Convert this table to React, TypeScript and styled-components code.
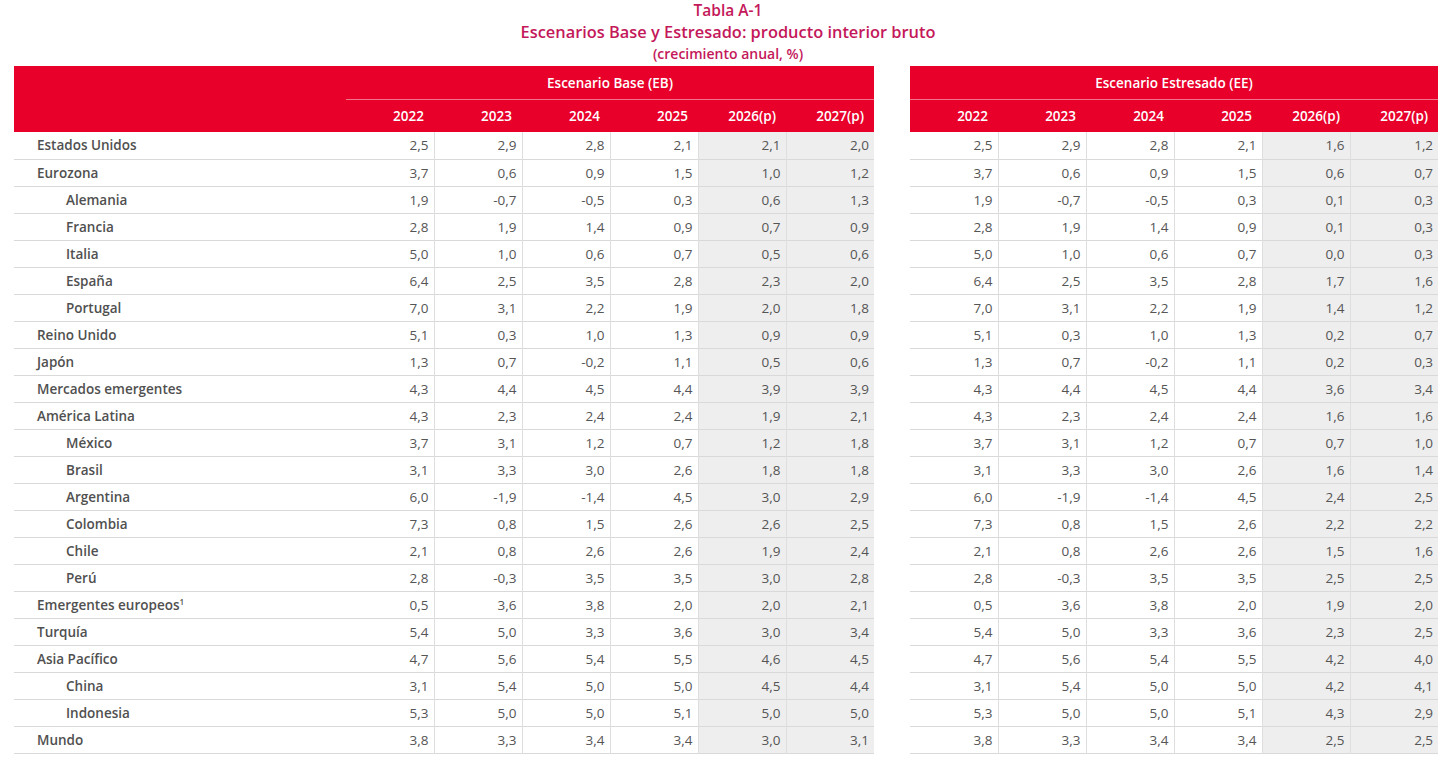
import React from 'react';
import styled, { createGlobalStyle, css } from 'styled-components';

const GlobalStyle = createGlobalStyle`
  html, body {
    margin: 0;
    padding: 0;
    background: #ffffff;
  }
  body {
    font-family: 'Open Sans', 'Liberation Sans', sans-serif;
  }
`;

interface RowData {
  label: string;
  indent?: boolean;
  note?: string;
  base: string[];
  stress: string[];
}

const years = ['2022', '2023', '2024', '2025', '2026(p)', '2027(p)'];

// las cuatro primeras columnas coinciden en ambos escenarios
const r = (
  label: string,
  base: string,
  stress: string,
  indent = false,
  note?: string,
): RowData => {
  const b = base.split(' ');
  return {
    label,
    indent,
    note,
    base: b,
    stress: [...b.slice(0, 4), ...stress.split(' ')],
  };
};

const rows: RowData[] = [
  r('Estados Unidos', '2,5 2,9 2,8 2,1 2,1 2,0', '1,6 1,2'),
  r('Eurozona', '3,7 0,6 0,9 1,5 1,0 1,2', '0,6 0,7'),
  r('Alemania', '1,9 -0,7 -0,5 0,3 0,6 1,3', '0,1 0,3', true),
  r('Francia', '2,8 1,9 1,4 0,9 0,7 0,9', '0,1 0,3', true),
  r('Italia', '5,0 1,0 0,6 0,7 0,5 0,6', '0,0 0,3', true),
  r('España', '6,4 2,5 3,5 2,8 2,3 2,0', '1,7 1,6', true),
  r('Portugal', '7,0 3,1 2,2 1,9 2,0 1,8', '1,4 1,2', true),
  r('Reino Unido', '5,1 0,3 1,0 1,3 0,9 0,9', '0,2 0,7'),
  r('Japón', '1,3 0,7 -0,2 1,1 0,5 0,6', '0,2 0,3'),
  r('Mercados emergentes', '4,3 4,4 4,5 4,4 3,9 3,9', '3,6 3,4'),
  r('América Latina', '4,3 2,3 2,4 2,4 1,9 2,1', '1,6 1,6'),
  r('México', '3,7 3,1 1,2 0,7 1,2 1,8', '0,7 1,0', true),
  r('Brasil', '3,1 3,3 3,0 2,6 1,8 1,8', '1,6 1,4', true),
  r('Argentina', '6,0 -1,9 -1,4 4,5 3,0 2,9', '2,4 2,5', true),
  r('Colombia', '7,3 0,8 1,5 2,6 2,6 2,5', '2,2 2,2', true),
  r('Chile', '2,1 0,8 2,6 2,6 1,9 2,4', '1,5 1,6', true),
  r('Perú', '2,8 -0,3 3,5 3,5 3,0 2,8', '2,5 2,5', true),
  r('Emergentes europeos', '0,5 3,6 3,8 2,0 2,0 2,1', '1,9 2,0', false, '1'),
  r('Turquía', '5,4 5,0 3,3 3,6 3,0 3,4', '2,3 2,5'),
  r('Asia Pacífico', '4,7 5,6 5,4 5,5 4,6 4,5', '4,2 4,0'),
  r('China', '3,1 5,4 5,0 5,0 4,5 4,4', '4,2 4,1', true),
  r('Indonesia', '5,3 5,0 5,0 5,1 5,0 5,0', '4,3 2,9', true),
  r('Mundo', '3,8 3,3 3,4 3,4 3,0 3,1', '2,5 2,5'),
];

const Page = styled.div`
  width: 1449px;
  box-sizing: border-box;
  padding: 0 11px 0 14px;
`;

const TitleBlock = styled.header`
  display: flex;
  flex-direction: column;
  align-items: center;
  color: #c4185a;
  font-weight: 600;
  margin-bottom: 3.5px;
  padding-left: 4px;
`;

const TitleLine = styled.div<{ size: number; lh: number }>`
  font-size: ${({ size }) => size}px;
  line-height: ${({ lh }) => lh}px;
  white-space: nowrap;
`;

const Panels = styled.div`
  display: flex;
  flex-direction: row;
  gap: 36px;
  align-items: flex-start;
`;

const Table = styled.table<{ width: number }>`
  width: ${({ width }) => width}px;
  border-collapse: collapse;
  table-layout: fixed;
`;

const GroupHead = styled.th`
  background: #e8002b;
  color: #ffffff;
  font-size: 13.5px;
  font-weight: 600;
  height: 33px;
  padding: 0;
  text-align: center;
  border-bottom: 1px solid rgba(255, 255, 255, 0.45);
`;

const CornerHead = styled.th`
  background: #e8002b;
  padding: 0;
`;

const YearHead = styled.th`
  background: #e8002b;
  color: #ffffff;
  font-size: 13.5px;
  font-weight: 600;
  height: 32px;
  padding: 0 10px 0 0;
  text-align: right;
  white-space: nowrap;
`;

const BodyRow = styled.tr`
  height: 27px;
  border-bottom: 1px solid #d9d9d9;
`;

const LabelCell = styled.td<{ indent?: boolean }>`
  padding: 0 0 0 ${({ indent }) => (indent ? 52 : 23)}px;
  font-size: 13.5px;
  font-weight: 600;
  color: #505050;
  white-space: nowrap;
`;

const Note = styled.sup`
  font-size: 8px;
  vertical-align: 5px;
  line-height: 0;
`;

const ValueCell = styled.td<{ shaded?: boolean; last?: boolean }>`
  padding: 0 5px 0 0;
  font-size: 13.5px;
  color: #555555;
  text-align: right;
  border-right: 1px solid #dedede;
  ${({ shaded }) =>
    shaded &&
    css`
      background: #eeeeee;
    `}
  ${({ last }) =>
    last &&
    css`
      border-right: none;
    `}
`;

const Values: React.FC<{ values: string[] }> = ({ values }) => (
  <>
    {values.map((v, i) => (
      <ValueCell key={i} shaded={i >= 4} last={i === values.length - 1}>
        {v}
      </ValueCell>
    ))}
  </>
);

const ColGroup: React.FC<{ label?: boolean; col: number }> = ({
  label,
  col,
}) => (
  <colgroup>
    {label && <col style={{ width: 332 }} />}
    {years.map((y) => (
      <col key={y} style={{ width: col }} />
    ))}
  </colgroup>
);

const BaseTable: React.FC = () => (
  <Table width={860}>
    <ColGroup label col={88} />
    <thead>
      <tr>
        <CornerHead rowSpan={2} />
        <GroupHead colSpan={6}>Escenario Base (EB)</GroupHead>
      </tr>
      <tr>
        {years.map((y) => (
          <YearHead key={y}>{y}</YearHead>
        ))}
      </tr>
    </thead>
    <tbody>
      {rows.map((row) => (
        <BodyRow key={row.label}>
          <LabelCell indent={row.indent}>
            {row.label}
            {row.note && <Note>{row.note}</Note>}
          </LabelCell>
          <Values values={row.base} />
        </BodyRow>
      ))}
    </tbody>
  </Table>
);

const StressTable: React.FC = () => (
  <Table width={529}>
    <ColGroup col={88} />
    <thead>
      <tr>
        <GroupHead colSpan={6}>Escenario Estresado (EE)</GroupHead>
      </tr>
      <tr>
        {years.map((y) => (
          <YearHead key={y}>{y}</YearHead>
        ))}
      </tr>
    </thead>
    <tbody>
      {rows.map((row) => (
        <BodyRow key={row.label}>
          <Values values={row.stress} />
        </BodyRow>
      ))}
    </tbody>
  </Table>
);

const App: React.FC = () => (
  <Page>
    <GlobalStyle />
    <TitleBlock>
      <TitleLine size={15.5} lh={21}>
        Tabla A-1
      </TitleLine>
      <TitleLine size={16.4} lh={22.5}>
        Escenarios Base y Estresado: producto interior bruto
      </TitleLine>
      <TitleLine size={14} lh={19}>
        (crecimiento anual, %)
      </TitleLine>
    </TitleBlock>
    <Panels>
      <BaseTable />
      <StressTable />
    </Panels>
  </Page>
);

export default App;
